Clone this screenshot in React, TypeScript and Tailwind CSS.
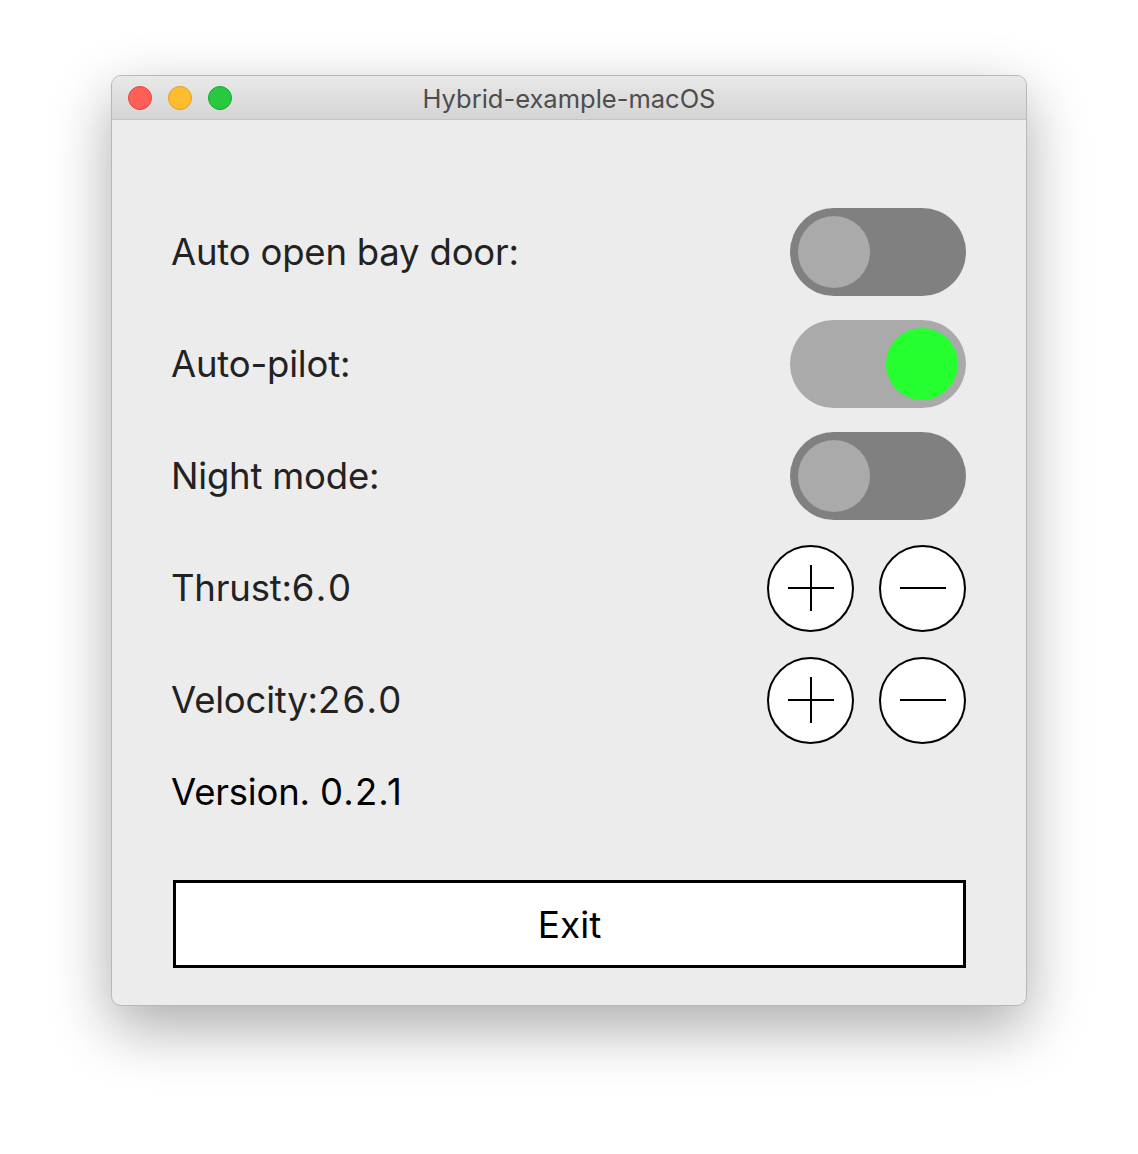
import { type ReactNode } from 'react'

const font = { fontFamily: 'Inter, "Noto Sans", sans-serif' }

function Toggle({ on }: { on: boolean }) {
  return (
    <div
      className={`flex h-[88px] w-[176px] items-center rounded-full px-[8px] ${
        on ? 'justify-end bg-[#aaaaaa]' : 'justify-start bg-[#808080]'
      }`}
    >
      <div
        className={`h-[72px] w-[72px] rounded-full ${on ? 'bg-[#26ff2f]' : 'bg-[#aaaaaa]'}`}
      />
    </div>
  )
}

function RoundButton({ kind }: { kind: 'plus' | 'minus' }) {
  return (
    <div className="flex h-[87px] w-[87px] items-center justify-center rounded-full border-2 border-black bg-white">
      <svg width="48" height="48" viewBox="0 0 48 48" aria-hidden>
        <line x1="1" y1="24" x2="47" y2="24" stroke="black" strokeWidth="2" />
        {kind === 'plus' && <line x1="24" y1="1" x2="24" y2="47" stroke="black" strokeWidth="2" />}
      </svg>
    </div>
  )
}

function Row({ children, right }: { children: ReactNode; right: ReactNode }) {
  return (
    <div className="flex h-[112px] items-center justify-between">
      <span className="text-[36.5px] leading-none tracking-[-0.2px] text-[#222222]">{children}</span>
      {right}
    </div>
  )
}

function Steppers() {
  return (
    <div className="flex gap-[25px]">
      <RoundButton kind="plus" />
      <RoundButton kind="minus" />
    </div>
  )
}

export default function App() {
  return (
    <div className="min-h-[1154px] w-[1138px] bg-white pl-[111px] pt-[75px]" style={font}>
      <div className="w-[916px] overflow-hidden rounded-[10px] border border-[#b8b8b8] bg-[#ececec] shadow-[0_22px_60px_rgba(0,0,0,0.33)]">
        {/* title bar */}
        <div className="relative flex h-[44px] items-center justify-center border-b border-[#c4c4c4] bg-gradient-to-b from-[#e9e9e9] to-[#d4d4d4] pt-[3px]">
          <div className="absolute left-[16px] top-[10px] flex gap-[16px]">
            <span className="h-[24px] w-[24px] rounded-full border border-[#e2463f] bg-[#ff5f57]" />
            <span className="h-[24px] w-[24px] rounded-full border border-[#e1a116] bg-[#febc2e]" />
            <span className="h-[24px] w-[24px] rounded-full border border-[#12ac28] bg-[#28c840]" />
          </div>
          <span className="text-[25.5px] leading-none text-[#4d4d4d]">Hybrid-example-macOS</span>
        </div>

        {/* content */}
        <div className="pb-[37px] pl-[59px] pr-[60px] pt-[76px]">
          <Row right={<Toggle on={false} />}>Auto open bay door:</Row>
          <Row right={<Toggle on />}>Auto-pilot:</Row>
          <Row right={<Toggle on={false} />}>Night mode:</Row>
          <Row right={<Steppers />}>
            Thrust:<span className="tracking-[2.6px]">6.0</span>
          </Row>
          <Row right={<Steppers />}>
            Velocity:<span className="tracking-[2.4px]">26.0</span>
          </Row>
          <div className="flex h-[72px] items-center">
            <span className="text-[36.5px] leading-none tracking-[-0.2px] text-black">
              Version. <span className="tracking-[1.2px]">0.2.1</span>
            </span>
          </div>
          <div className="ml-[2px] mt-[52px] flex h-[88px] items-center justify-center border-[3px] border-black bg-white">
            <span className="text-[37px] leading-none text-black">Exit</span>
          </div>
        </div>
      </div>
    </div>
  )
}
